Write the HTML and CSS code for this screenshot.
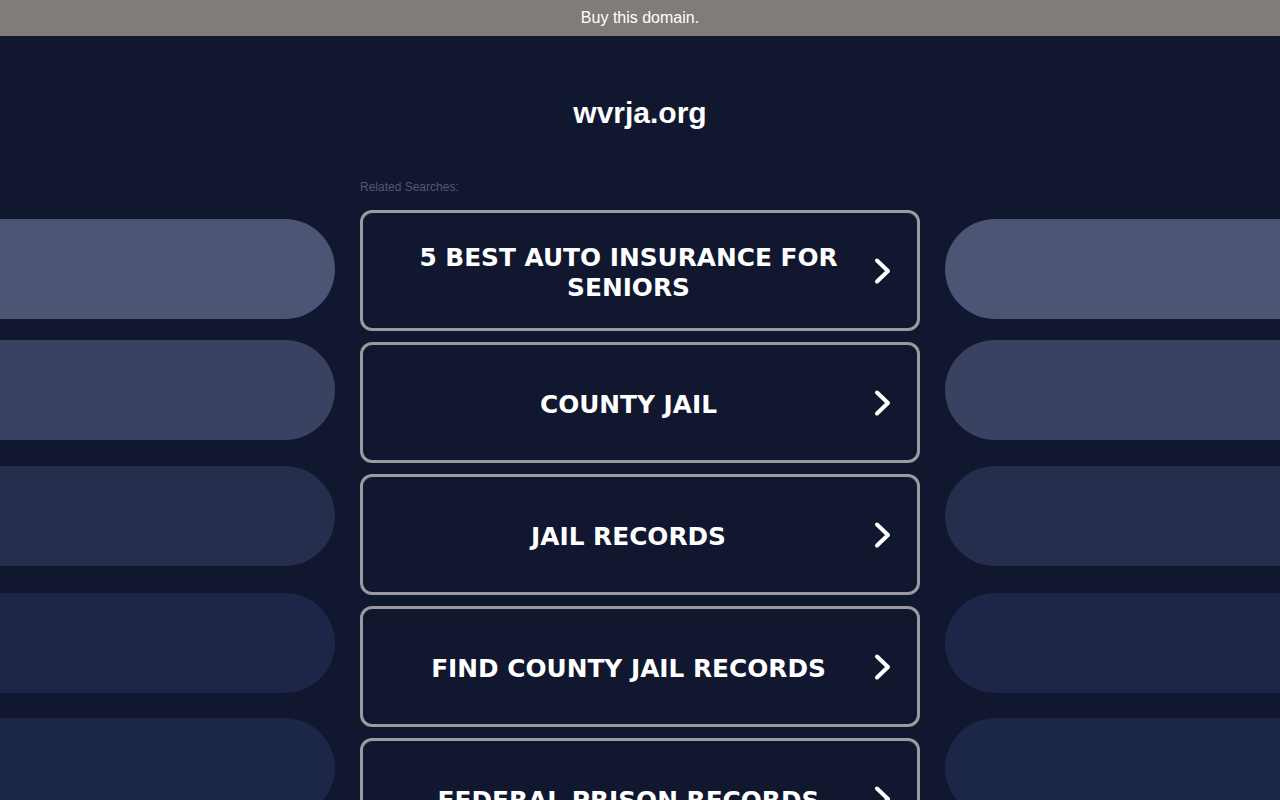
FILE: index.html
```html
<!DOCTYPE html>
<html lang="en">
<head>
<meta charset="utf-8">
<title>wvrja.org</title>
<link rel="stylesheet" href="styles.css">
</head>
<body>
<div class="topbar">Buy this domain.</div>
<h1 class="title">wvrja.org</h1>
<div class="main">
  <div class="side side-left">
    <div class="pill p1"></div>
    <div class="pill p2"></div>
    <div class="pill p3"></div>
    <div class="pill p4"></div>
    <div class="pill p5"></div>
  </div>
  <div class="center">
    <div class="label">Related Searches:</div>
    <div class="cards">
      <a class="card" href="#"><span class="card-text">5 BEST AUTO INSURANCE FOR SENIORS</span><svg class="chev" viewBox="0 0 20 28" width="20" height="28"><polyline points="4,3.5 15,14 4,24.5"/></svg></a>
      <a class="card" href="#"><span class="card-text">COUNTY JAIL</span><svg class="chev" viewBox="0 0 20 28" width="20" height="28"><polyline points="4,3.5 15,14 4,24.5"/></svg></a>
      <a class="card" href="#"><span class="card-text">JAIL RECORDS</span><svg class="chev" viewBox="0 0 20 28" width="20" height="28"><polyline points="4,3.5 15,14 4,24.5"/></svg></a>
      <a class="card" href="#"><span class="card-text">FIND COUNTY JAIL RECORDS</span><svg class="chev" viewBox="0 0 20 28" width="20" height="28"><polyline points="4,3.5 15,14 4,24.5"/></svg></a>
      <a class="card" href="#"><span class="card-text">FEDERAL PRISON RECORDS</span><svg class="chev" viewBox="0 0 20 28" width="20" height="28"><polyline points="4,3.5 15,14 4,24.5"/></svg></a>
    </div>
  </div>
  <div class="side side-right">
    <div class="pill p1"></div>
    <div class="pill p2"></div>
    <div class="pill p3"></div>
    <div class="pill p4"></div>
    <div class="pill p5"></div>
  </div>
</div>
</body>
</html>
```

FILE: styles.css
```css
html, body {
  margin: 0;
  padding: 0;
}
body {
  background: #11172e;
  font-family: "Liberation Sans", Arial, sans-serif;
  color: #fff;
  overflow: hidden;
  height: 800px;
}
.topbar {
  height: 36px;
  line-height: 35px;
  background: #807c79;
  color: #fff;
  text-align: center;
  font-size: 16px;
}
.title {
  margin: 59px 0 0;
  height: 36px;
  line-height: 36px;
  font-size: 30px;
  font-weight: bold;
  text-align: center;
  color: #fff;
}
.main {
  display: grid;
  grid-template-columns: 1fr 560px 1fr;
  column-gap: 25px;
  margin-top: 49px;
}
.side {
  display: flex;
  flex-direction: column;
  padding-top: 39px;
}
.pill {
  height: 100px;
  flex: none;
}
.side-left .pill {
  border-radius: 0 50px 50px 0;
}
.side-right .pill {
  border-radius: 50px 0 0 50px;
}
.p1 { background: #4c5674; }
.p2 { background: #3a4261; margin-top: 21px; }
.p3 { background: #262e4d; margin-top: 26px; }
.p4 { background: #1d2648; margin-top: 27px; }
.p5 { background: #1c2649; margin-top: 25px; }
.label {
  font-size: 12px;
  line-height: 14px;
  color: #4f5774;
  margin-bottom: 16px;
}
.cards {
  display: flex;
  flex-direction: column;
  gap: 11px;
}
.card {
  box-sizing: border-box;
  height: 121px;
  border: 3px solid #9b9b9d;
  border-radius: 12px;
  display: flex;
  align-items: center;
  padding: 0 24px 0 31px;
  gap: 10px;
  text-decoration: none;
  color: #fff;
}
.card-text {
  flex: 1;
  text-align: center;
  font-family: "DejaVu Sans", Verdana, sans-serif;
  font-weight: bold;
  font-size: 24.8px;
  line-height: 30px;
  padding-top: 4px;
  color: #fff;
}
.chev {
  flex: none;
  display: block;
}
.chev polyline {
  fill: none;
  stroke: #fff;
  stroke-width: 4;
  stroke-linecap: round;
  stroke-linejoin: round;
}
```
